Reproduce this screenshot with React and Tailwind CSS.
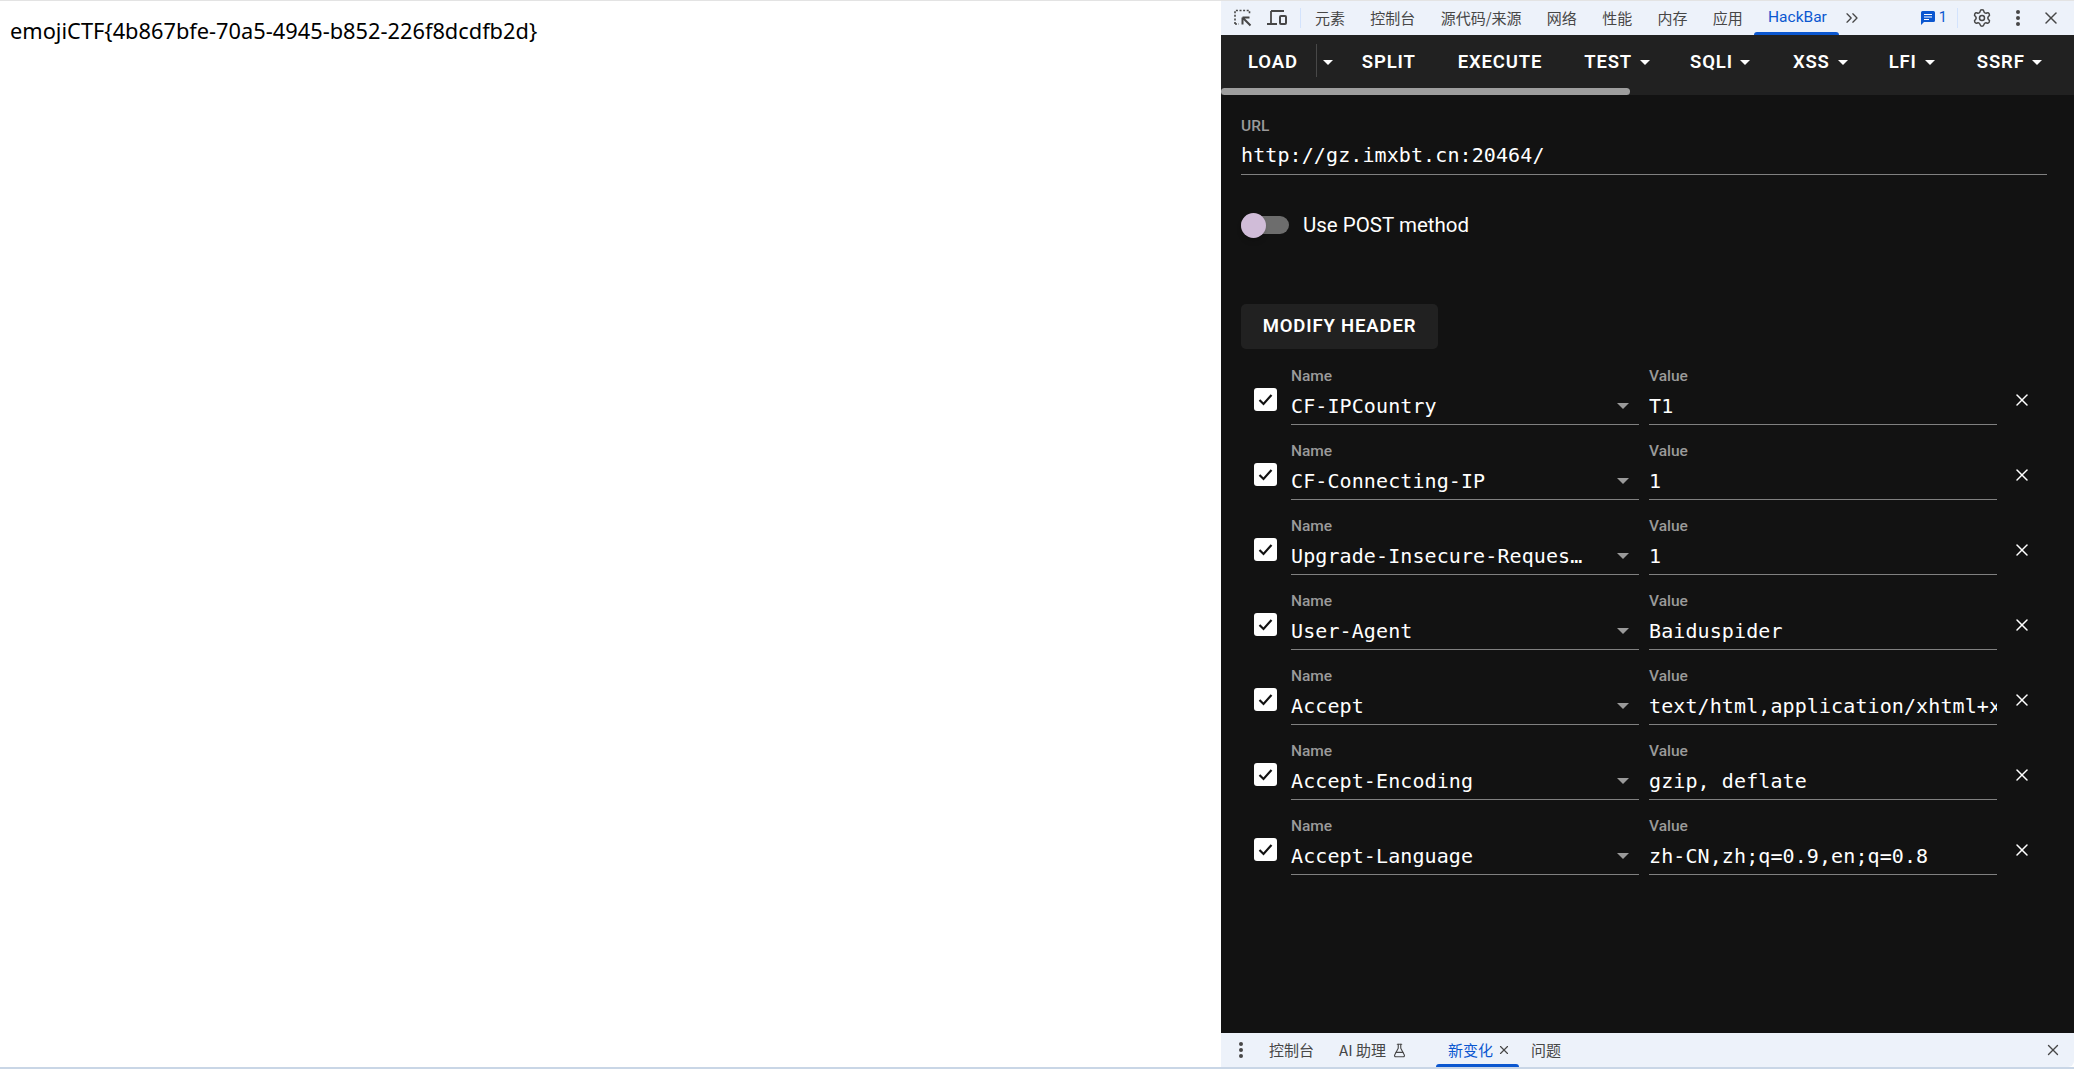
import React from 'react';
import { ChevronsRight, FlaskConical, Settings, X } from 'lucide-react';

const mono = "font-['DejaVu_Sans_Mono','Liberation_Mono',monospace]";

const headers = [
  { name: 'CF-IPCountry', value: 'T1' },
  { name: 'CF-Connecting-IP', value: '1' },
  { name: 'Upgrade-Insecure-Requests', value: '1' },
  { name: 'User-Agent', value: 'Baiduspider' },
  { name: 'Accept', value: 'text/html,application/xhtml+xml,application/xml;q=0.9,image/webp' },
  { name: 'Accept-Encoding', value: 'gzip, deflate' },
  { name: 'Accept-Language', value: 'zh-CN,zh;q=0.9,en;q=0.8' },
];

function Caret({ className = '' }) {
  return <span className={`inline-block h-0 w-0 border-x-[5px] border-t-[5px] border-x-transparent border-t-white ${className}`} />;
}

function Dots({ className = '' }) {
  return (
    <svg width="6" height="18" viewBox="0 0 6 18" className={className}>
      <circle cx="3" cy="3" r="2" fill="currentColor" />
      <circle cx="3" cy="9" r="2" fill="currentColor" />
      <circle cx="3" cy="15" r="2" fill="currentColor" />
    </svg>
  );
}

function InspectIcon() {
  return (
    <svg width="20" height="20" viewBox="0 0 20 20" fill="none" stroke="#474747">
      <path d="M2 16V2.500h14.500V7M2 16h4" strokeWidth="1.600" strokeDasharray="2 1.600" />
      <path d="M9.500 9.500h7M9.500 9.500v7M9.500 9.500l8 8" strokeWidth="2" />
    </svg>
  );
}

function DeviceIcon() {
  return (
    <svg width="22" height="18" viewBox="0 0 22 18" fill="none" stroke="#474747" strokeWidth="1.800">
      <path d="M5 2h13M5 2v12M1 15h10" />
      <rect x="14" y="7" width="6" height="8" rx="1" strokeWidth="2" />
    </svg>
  );
}

function IssueIcon() {
  return (
    <svg width="14" height="14" viewBox="0 0 14 14">
      <path d="M1.500 0h11A1.500 1.500 0 0 1 14 1.500v8a1.500 1.500 0 0 1-1.500 1.500H3l-3 3V1.500A1.500 1.500 0 0 1 1.500 0z" fill="#0b57d0" />
      <path d="M3 3.500h8M3 6h8M3 8.500h5" stroke="#fff" strokeWidth="1.200" />
    </svg>
  );
}

function CheckBox() {
  return (
    <span className="flex h-[23px] w-[23px] items-center justify-center rounded-[3px] bg-white">
      <svg width="17" height="17" viewBox="0 0 17 17" fill="none" stroke="#121212" strokeWidth="2.200">
        <path d="M2.500 9l4 4 8-9" />
      </svg>
    </span>
  );
}

function DevtoolsTabs() {
  return (
    <div className="relative flex h-[34px] shrink-0 items-center bg-[#edf2fa] text-[15px] text-[#474747]">
      <div className="ml-[11px] flex w-[22px] justify-center"><InspectIcon /></div>
      <div className="ml-[12px] flex w-[22px] justify-center"><DeviceIcon /></div>
      <div className="ml-[12px] h-[20px] w-px bg-[#d3e3fd]" />
      <div className="ml-[14px] flex items-center gap-[25.300px]">
        <span>元素</span>
        <span>控制台</span>
        <span>源代码/来源</span>
        <span>网络</span>
        <span>性能</span>
        <span>内存</span>
        <span>应用</span>
        <span className="font-['Roboto',sans-serif] text-[15.500px] text-[#0b57d0]">HackBar</span>
      </div>
      <ChevronsRight size={20} strokeWidth={1.600} className="ml-[15px]" />
      <div className="ml-auto flex items-center">
        <IssueIcon />
        <span className="ml-[4px] font-['Roboto',sans-serif] text-[14.500px] text-[#0b57d0]">1</span>
        <div className="ml-[10px] h-[20px] w-px bg-[#d3e3fd]" />
        <Settings size={20} strokeWidth={1.800} className="ml-[14px]" />
        <Dots className="ml-[23px]" />
        <X size={20} strokeWidth={1.800} className="ml-[20px] mr-[13px]" />
      </div>
      <div className="absolute bottom-0 left-[533px] h-[3px] w-[85px] rounded-t-[3px] bg-[#0b57d0]" />
    </div>
  );
}

function Toolbar() {
  return (
    <div className="relative flex h-[60px] shrink-0 items-start bg-[#212121] pt-[15px] font-['Roboto',sans-serif] text-[18.500px] font-semibold leading-[24px] tracking-[0.850px] text-white">
      <span className="ml-[27px]">LOAD</span>
      <span className="ml-[18px] -mt-[6px] h-[33px] w-px bg-[#484848]" />
      <Caret className="ml-[6px] mt-[10px]" />
      <span className="ml-[29px]">SPLIT</span>
      <span className="ml-[42px]">EXECUTE</span>
      <span className="ml-[42px]">TEST</span>
      <Caret className="ml-[8px] mt-[10px]" />
      <span className="ml-[40px]">SQLI</span>
      <Caret className="ml-[7px] mt-[10px]" />
      <span className="ml-[43px]">XSS</span>
      <Caret className="ml-[8px] mt-[10px]" />
      <span className="ml-[41px]">LFI</span>
      <Caret className="ml-[8px] mt-[10px]" />
      <span className="ml-[42px]">SSRF</span>
      <Caret className="ml-[7px] mt-[10px]" />
      <div className="absolute bottom-0 left-0 h-[7px] w-[409px] rounded-full bg-[#9e9e9e]" />
    </div>
  );
}

function HeaderRow({ name, value }) {
  return (
    <div className="flex h-[75px] items-start">
      <div className="ml-[33px] mt-[21px]"><CheckBox /></div>
      <div className="ml-[14px] w-[348px]">
        <div className="h-[18px] text-[15.500px] font-medium leading-[18px] text-[#9a9a9a]">Name</div>
        <div className={`flex h-[40px] items-center border-b border-[#808080] pt-[3px] text-[20px] text-white ${mono}`}>
          <span className="w-[298px] truncate tracking-[0.100px]">{name}</span>
          <span className="ml-auto mr-[10px] inline-block h-0 w-0 border-x-[6px] border-t-[6px] border-x-transparent border-t-[#9a9a9a]" />
        </div>
      </div>
      <div className="ml-[10px] w-[348px]">
        <div className="h-[18px] text-[15.500px] font-medium leading-[18px] text-[#9a9a9a]">Value</div>
        <div className={`flex h-[40px] items-center overflow-hidden whitespace-nowrap border-b border-[#808080] pt-[3px] text-[20px] tracking-[0.100px] text-white ${mono}`}>
          {value}
        </div>
      </div>
      <X size={20} strokeWidth={1.800} className="ml-[15px] mt-[23px] text-white" />
    </div>
  );
}

function HackBar() {
  return (
    <div className="min-h-0 flex-1 bg-[#121212] pt-[22px] font-['Roboto',sans-serif]">
      <div className="ml-[20px] mr-[27px]">
        <div className="h-[18px] text-[15.500px] font-medium leading-[18px] text-[#9a9a9a]">URL</div>
        <div className={`flex h-[40px] items-center border-b border-[#808080] text-[20px] tracking-[0.100px] text-white ${mono}`}>
          http://gz.imxbt.cn:20464/
        </div>
      </div>
      <div className="ml-[20px] mt-[41px] flex h-[18px] items-center">
        <div className="relative h-[18px] w-[48px] rounded-full bg-[#6d6d6d]">
          <div className="absolute -top-[3px] left-0 h-[25px] w-[25px] rounded-full bg-[#d0bcd8] shadow-md" />
        </div>
        <span className="ml-[14px] text-[20.500px] text-white">Use POST method</span>
      </div>
      <div className="ml-[20px] mt-[70px] flex h-[45px] w-[197px] items-center justify-center rounded-[5px] bg-[#212121] text-[18.500px] font-semibold tracking-[0.850px] text-white">
        MODIFY HEADER
      </div>
      <div className="mt-[18px]">
        {headers.map((h) => <HeaderRow key={h.name} name={h.name} value={h.value} />)}
      </div>
    </div>
  );
}

function DrawerTabs() {
  return (
    <div className="relative flex h-[34px] shrink-0 items-center rounded-br-[6px] bg-[#edf2fa] text-[15px] text-[#474747]">
      <Dots className="ml-[17px]" />
      <span className="ml-[25px]">控制台</span>
      <span className="ml-[25px]">AI 助理</span>
      <FlaskConical size={15} strokeWidth={1.800} className="ml-[6px]" />
      <span className="ml-[41px] text-[#0b57d0]">新变化</span>
      <X size={14} strokeWidth={2} className="ml-[4px]" />
      <span className="ml-[20px]">问题</span>
      <X size={18} strokeWidth={1.800} className="ml-auto mr-[12px]" />
      <div className="absolute bottom-0 left-[215px] h-[3px] w-[83px] rounded-t-[3px] bg-[#0b57d0]" />
    </div>
  );
}

export default function App() {
  return (
    <div className="flex h-screen flex-col overflow-hidden bg-white font-['Noto_Sans_CJK_SC',sans-serif]">
      <div className="h-px shrink-0 bg-[#e3e3e3]" />
      <div className="flex min-h-0 flex-1">
        <div className="w-[1221px] shrink-0 pl-[10px] pt-[15px] font-['Noto_Sans','Noto_Sans_CJK_SC',sans-serif] text-[21.800px] leading-[29px] text-black">
          emojiCTF{'{'}4b867bfe-70a5-4945-b852-226f8dcdfb2d{'}'}
        </div>
        <div className="flex min-w-0 flex-1 flex-col">
          <DevtoolsTabs />
          <Toolbar />
          <HackBar />
          <DrawerTabs />
        </div>
      </div>
      <div className="h-[2px] shrink-0 bg-[#c9d6e6]" />
    </div>
  );
}
